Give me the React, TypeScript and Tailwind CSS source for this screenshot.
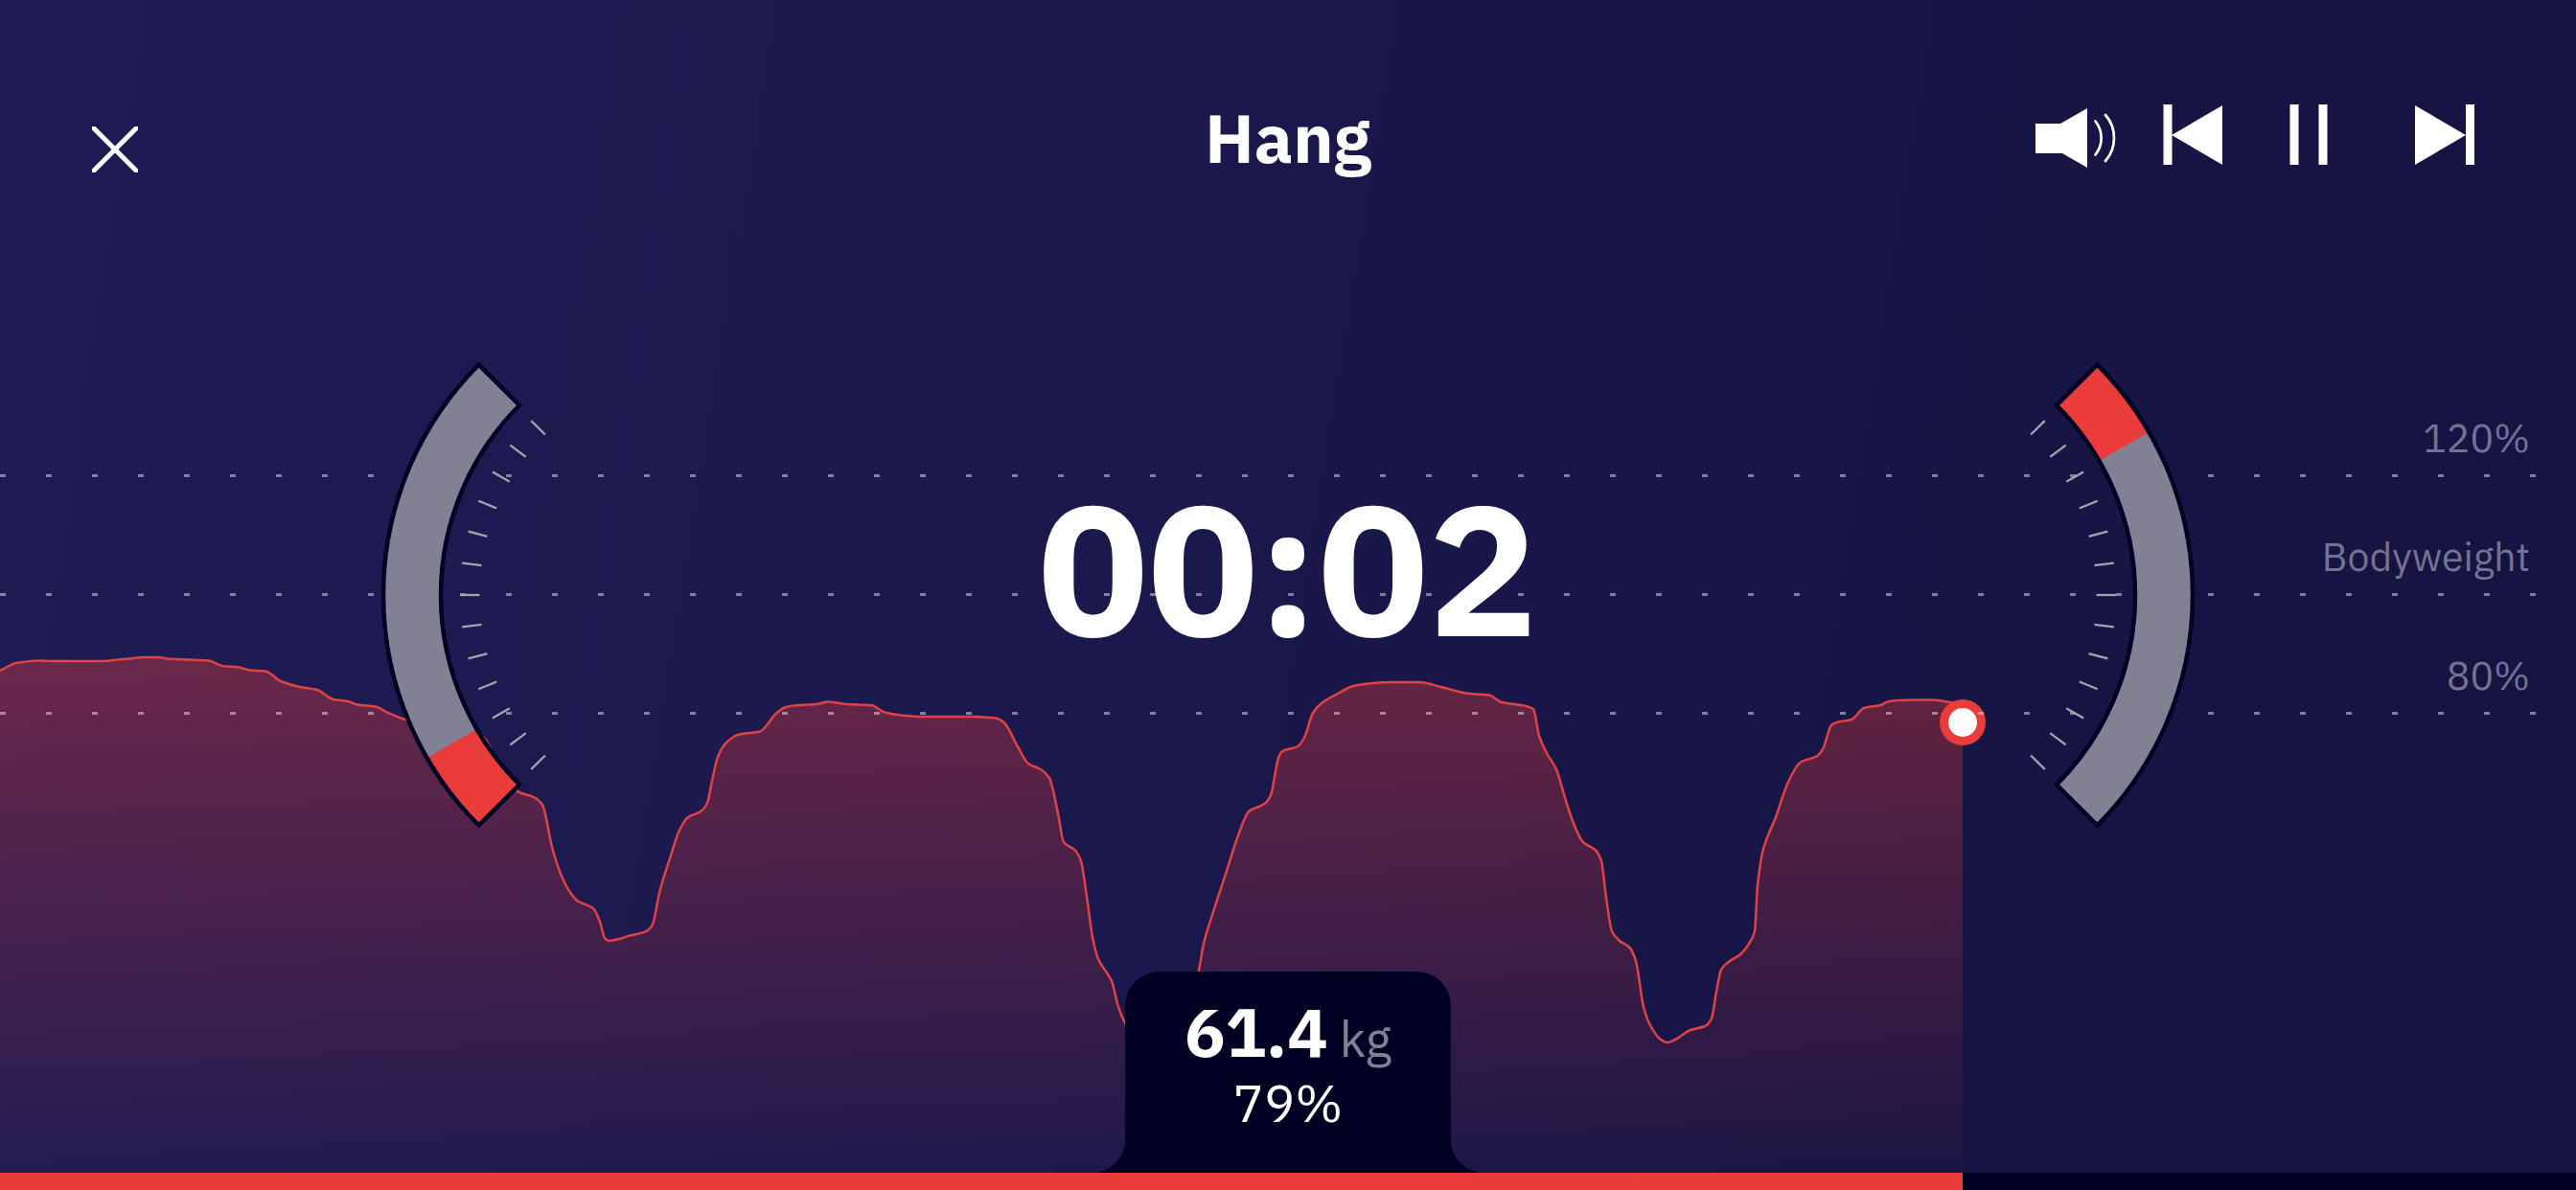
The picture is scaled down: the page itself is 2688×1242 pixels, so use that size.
import React from "react";

type Point = [number, number];

const WIDTH = 2688;
const HEIGHT = 1242;
const CHART_BOTTOM = 1224;
const NOW_X = 2048;

const force: Point[] = [
  [0, 700], [17, 692], [40, 689.5], [57, 690], [106, 690], [129, 688], [152, 686], [165, 686], [175, 687.5],
  [218, 689.5], [232, 695], [249, 696.5], [261, 699.5], [277, 700.5], [293, 711], [313, 717], [331, 720],
  [348, 730], [363, 732], [373, 735.5], [392, 737.5], [405, 744], [423, 751], [450, 756], [480, 759], [495, 762],
  [506, 771], [512, 781.5], [525, 812], [542, 827], [557, 832], [566, 840], [576, 884], [585, 912], [594, 930],
  [603, 940.5], [619, 948], [626, 962], [631, 979], [635, 982], [646, 980], [657, 976.5], [672, 973],
  [680, 967], [689, 928], [700, 893], [709, 866.5], [718, 853], [731, 847], [738, 838], [743, 815],
  [749, 790], [758, 775], [771, 766.5], [793, 763.5], [800, 757], [809, 745.5], [820, 738], [834, 736],
  [852, 735], [864, 732.5], [883, 735], [909, 736], [923, 743.5], [941, 746.5], [963, 748], [1012, 748],
  [1039, 749.5], [1048, 754.5], [1061, 777.5], [1073, 797], [1086, 803], [1095, 812], [1104, 849],
  [1110, 879], [1122, 887.5], [1128, 899], [1134, 935.5], [1140, 978], [1146, 1001], [1160, 1024],
  [1167, 1051], [1175, 1070], [1200, 1110], [1235, 1100], [1251, 1013], [1256, 985], [1265, 955],
  [1280, 909], [1294, 866.5], [1303, 847], [1320, 838.5], [1326, 830], [1334, 791], [1338, 784],
  [1354, 779], [1361, 770], [1370, 744], [1379, 734], [1394, 725], [1412, 716], [1427, 713.5],
  [1453, 712], [1481, 712], [1504, 717], [1530, 723.5], [1554, 725.5], [1567, 733], [1588, 736],
  [1600, 740], [1606, 768], [1614, 786], [1624, 803], [1634, 836], [1643, 862], [1652, 879],
  [1665, 887.5], [1671, 899], [1676, 937], [1682, 972], [1690, 982], [1700, 988.5], [1707, 1003],
  [1715, 1051], [1723, 1072], [1733, 1085], [1740, 1088], [1749, 1084.5], [1764, 1075], [1779, 1071],
  [1786, 1063], [1791, 1035], [1796, 1012], [1805, 1003], [1815, 997], [1825, 985], [1831, 972],
  [1834, 924], [1840, 886], [1853, 853], [1866, 816], [1879, 795.5], [1896, 789], [1902, 782],
  [1911, 757], [1918, 753.5], [1932, 751], [1945, 739], [1962, 736], [1971, 732], [1994, 730.5], [2017, 730.5],
  [2035, 733], [2048, 734],
];

/* Monotone cubic interpolation: smooth between samples and never overshooting them. */
function smoothPath(points: Point[]): string {
  const slopes = points.slice(1).map((p, i) => (p[1] - points[i][1]) / (p[0] - points[i][0]));
  const tangents = points.map((_, i) => {
    if (i === 0) return slopes[0];
    if (i === points.length - 1) return slopes[i - 1];
    const a = slopes[i - 1];
    const b = slopes[i];
    return a * b <= 0 ? 0 : (2 * a * b) / (a + b);
  });
  let d = `M${points[0][0]} ${points[0][1]}`;
  for (let i = 1; i < points.length; i++) {
    const [x0, y0] = points[i - 1];
    const [x1, y1] = points[i];
    const h = (x1 - x0) / 3;
    d += `C${x0 + h} ${y0 + tangents[i - 1] * h} ${x1 - h} ${y1 - tangents[i] * h} ${x1} ${y1}`;
  }
  return d;
}

const line = smoothPath(force);

function ForceChart() {
  return (
    <svg
      viewBox={`0 0 ${WIDTH} ${HEIGHT}`}
      preserveAspectRatio="none"
      className="h-full w-full [grid-area:1/1]"
      role="img"
      aria-label="Force over time"
    >
      <defs>
        <linearGradient id="area" gradientUnits="userSpaceOnUse" x1="0" y1="686" x2="0" y2={CHART_BOTTOM}>
          <stop offset="0" stopColor="#ea3c3a" stopOpacity="0.38" />
          <stop offset="1" stopColor="#ea3c3a" stopOpacity="0.02" />
        </linearGradient>
      </defs>
      <path d={`${line}V${CHART_BOTTOM}H0Z`} fill="url(#area)" />
      <path d={line} fill="none" stroke="#e04346" strokeWidth="2.5" strokeLinejoin="round" />
      <circle cx={NOW_X} cy="754" r="24" fill="#ea3c3a" />
      <circle cx={NOW_X} cy="754" r="15" fill="#fff" />
    </svg>
  );
}

function ScaleLines() {
  return (
    <div className="flex flex-col self-center pb-[122px] [grid-area:1/1]">
      {["120%", "Bodyweight", "80%"].map((label) => (
        <div key={label} className="flex h-[124px] flex-col justify-end">
          <span className="mb-[18px] pr-12 text-right text-[41px] leading-10 text-[#747290]">{label}</span>
          <div className="mr-[42px] h-[3px] bg-[repeating-linear-gradient(90deg,rgba(255,255,255,0.45)_0_6px,transparent_6px_48px)]" />
        </div>
      ))}
    </div>
  );
}

const polar = (r: number, deg: number) => {
  const a = (deg * Math.PI) / 180;
  return `${-r * Math.cos(a)} ${r * Math.sin(a)}`;
};

const band = (from: number, to: number) =>
  `M${polar(340, from)}A340 340 0 0 0 ${polar(340, to)}L${polar(280, to)}A280 280 0 0 1 ${polar(280, from)}Z`;

function Gauge({ label, flipped = false }: { label: string; flipped?: boolean }) {
  return (
    <svg
      viewBox="-344 -245 176 490"
      className={flipped ? "h-[490px] w-[176px] shrink-0 rotate-180" : "h-[490px] w-[176px] shrink-0"}
      role="img"
      aria-label={label}
    >
      <path d={band(-45, 45)} fill="#828093" />
      <path d={band(30, 45)} fill="#ea3c3a" />
      <path d={band(-45, 45)} fill="none" stroke="#000024" strokeWidth="4.5" />
      {Array.from({ length: 13 }, (_, i) => (i - 6) * 7.4).map((deg) => (
        <path key={deg} d={`M${polar(260, deg)}L${polar(239.5, deg)}`} stroke="#a6a5ad" strokeWidth="2.25" />
      ))}
    </svg>
  );
}

function Header() {
  return (
    <header className="grid grid-cols-3 items-start self-start px-24 pt-[108px] text-white [grid-area:1/1]">
      <div className="flex pt-6">
        <button type="button" aria-label="Close">
          <svg viewBox="0 0 48 48" className="block size-12" stroke="currentColor" strokeWidth="5">
            <path d="M0 0L48 48M48 0L0 48" />
          </svg>
        </button>
      </div>
      <h1 className="text-center text-[71px] leading-[72px] font-bold">Hang</h1>
      <div className="flex items-start justify-end gap-12 pr-2">
        <button type="button" aria-label="Sound">
          <svg viewBox="0 0 84 68" className="block h-[68px] w-[84px]" fill="currentColor">
            <path d="M0 21H26L54 5V67L28 52H0Z" />
            <path
              d="M62.5 18.5A28 28 0 0 1 62.5 53.5M73 12A36.5 36.5 0 0 1 73 60"
              fill="none"
              stroke="currentColor"
              strokeWidth="2.75"
              strokeLinecap="round"
            />
          </svg>
        </button>
        <button type="button" aria-label="Previous">
          <svg viewBox="0 0 64 64" className="block size-16" fill="currentColor">
            <path d="M1.5 1H10.5V64H1.5ZM10 33L63 2V64Z" />
          </svg>
        </button>
        <button type="button" aria-label="Pause">
          <svg viewBox="0 0 104 64" className="block h-16 w-[104px]" fill="currentColor">
            <path d="M21.5 1H30.5V64H21.5ZM51.5 1H60.5V64H51.5Z" />
          </svg>
        </button>
        <button type="button" aria-label="Next">
          <svg viewBox="0 0 64 64" className="block size-16" fill="currentColor">
            <path d="M53 1H62V64H53ZM53 33L0 2V64Z" />
          </svg>
        </button>
      </div>
    </header>
  );
}

function Readout({ progress }: { progress: number }) {
  return (
    <footer className="flex flex-col self-end [grid-area:1/1]">
      <div className="flex items-end justify-center">
        <div className="size-9 bg-[radial-gradient(circle_at_top_left,transparent_36px,#000022_37px)]" />
        <div className="flex w-[340px] flex-col items-center rounded-t-[36px] bg-[#000022] pt-[26px] pb-9 text-white">
          <p className="flex items-baseline gap-3">
            <strong className="text-[71px] leading-[74px] font-bold">61.4</strong>
            <span className="text-[52px] leading-none text-[#828093]">kg</span>
          </p>
          <p className="text-[54px] leading-[74px]">79%</p>
        </div>
        <div className="size-9 bg-[radial-gradient(circle_at_top_right,transparent_36px,#000022_37px)]" />
      </div>
      <div
        role="progressbar"
        aria-label="Workout progress"
        aria-valuenow={Math.round(progress)}
        className="h-[18px] bg-[#000022]"
      >
        <div className="h-full bg-[#ea3c3a]" style={{ width: `${progress}%` }} />
      </div>
    </footer>
  );
}

export default function App() {
  return (
    <main className="grid min-h-screen grid-cols-1 grid-rows-1 overflow-hidden bg-[linear-gradient(99deg,#1f1c54_0%,#1a184c_45%,#171544_75%,#161341_100%)] font-['IBM_Plex_Sans','Open_Sans',sans-serif]">
      <ForceChart />
      <ScaleLines />
      <section className="mx-auto flex w-full max-w-[1896px] items-center justify-between self-center [grid-area:1/1]">
        <Gauge label="Left hand load" />
        <time className="pb-[58px] text-[191px] leading-none font-bold text-white">00:02</time>
        <Gauge label="Right hand load" flipped />
      </section>
      <Header />
      <Readout progress={(NOW_X / WIDTH) * 100} />
    </main>
  );
}
